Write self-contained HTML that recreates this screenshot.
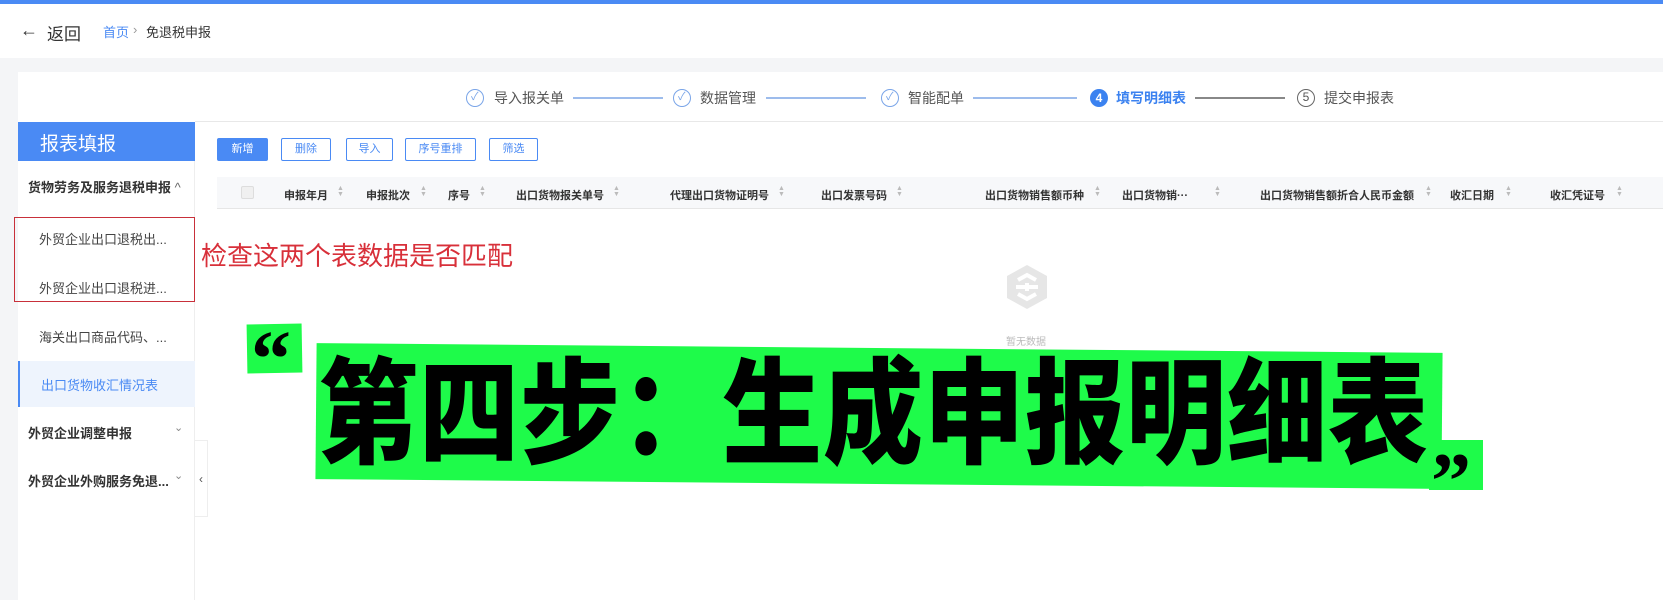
<!DOCTYPE html>
<html><head><meta charset="utf-8"><style>
*{margin:0;padding:0;box-sizing:border-box}
body{width:1663px;height:600px;overflow:hidden;background:#f4f5f7;font-family:"Liberation Sans","Noto Sans CJK SC",sans-serif;position:relative;color:#333}
.a{position:absolute;white-space:nowrap}
.top{left:0;top:0;width:1663px;height:4px;background:#4a8af4}
.hdr{left:0;top:4px;width:1663px;height:54px;background:#fff}
.card{left:18px;top:72px;width:1645px;height:528px;background:#fff}
.step{font-size:14px;color:#555;top:88px}
.circ{width:18px;height:18px;border:1.5px solid #7aa5e8;border-radius:50%;top:89px}
.line{height:1.5px;background:#9dbcec;top:97px}
.side{left:18px;top:122px;width:177px;height:478px;background:#fff;border-right:1px solid #eee}
.btn{top:138px;height:23px;border:1px solid #4a8af4;border-radius:2px;font-size:11px;color:#4a8af4;text-align:center;line-height:21px;background:#fff}
.th{font-size:11px;font-weight:bold;color:#333;top:187px}
.sort{font-size:7px;color:#bbb;line-height:6px;top:186px}
.mi{font-size:13px;color:#444}
</style></head><body>
<div class="a top"></div>
<div class="a hdr"></div>
<div class="a" style="left:20px;top:20px;font-size:18px;color:#333">←</div>
<div class="a" style="left:47px;top:20px;font-size:17px;color:#333">返回</div>
<div class="a" style="left:103px;top:22px;font-size:13px;color:#4a8af4">首页</div>
<div class="a" style="left:133px;top:22px;font-size:13px;color:#999">›</div>
<div class="a" style="left:146px;top:22px;font-size:13px;color:#333">免退税申报</div>
<div class="a card"></div>
<div class="a" style="left:195px;top:121px;width:1468px;height:1px;background:#e8e8e8"></div>

<div class="a circ" style="left:466px"></div><div class="a" style="left:471px;top:88px;font-size:11px;color:#7aa5e8">✓</div>
<div class="a step" style="left:494px">导入报关单</div>
<div class="a line" style="left:573px;width:90px"></div>
<div class="a circ" style="left:673px"></div><div class="a" style="left:678px;top:88px;font-size:11px;color:#7aa5e8">✓</div>
<div class="a step" style="left:700px">数据管理</div>
<div class="a line" style="left:766px;width:100px"></div>
<div class="a circ" style="left:881px"></div><div class="a" style="left:886px;top:88px;font-size:11px;color:#7aa5e8">✓</div>
<div class="a step" style="left:908px">智能配单</div>
<div class="a line" style="left:973px;width:104px"></div>
<div class="a" style="left:1090px;top:89px;width:18px;height:18px;border-radius:50%;background:#3b82f0;color:#fff;font-size:12px;font-weight:bold;text-align:center;line-height:18px">4</div>
<div class="a step" style="left:1116px;color:#3b82f0;font-weight:bold">填写明细表</div>
<div class="a line" style="left:1195px;width:90px;background:#888"></div>
<div class="a circ" style="left:1297px;border-color:#666;font-size:12px;line-height:15px;text-align:center;color:#555">5</div>
<div class="a step" style="left:1324px">提交申报表</div>

<div class="a side"></div>
<div class="a" style="left:18px;top:122px;width:177px;height:39px;background:#4a8af4"></div>
<div class="a" style="left:40px;top:129px;font-size:19px;color:#fff">报表填报</div>
<div class="a mi" style="left:28px;top:177px;font-weight:bold;color:#333">货物劳务及服务退税申报 <span style="font-weight:normal;color:#666">^</span></div>
<div class="a" style="left:14px;top:217px;width:181px;height:85px;border:1.5px solid #c8303a"></div>
<div class="a mi" style="left:39px;top:229px">外贸企业出口退税出...</div>
<div class="a mi" style="left:39px;top:278px">外贸企业出口退税进...</div>
<div class="a mi" style="left:39px;top:327px">海关出口商品代码、...</div>
<div class="a" style="left:18px;top:361px;width:177px;height:46px;background:#eef4fd;border-left:2px solid #4a8af4"></div>
<div class="a mi" style="left:41px;top:375px;color:#4a8af4">出口货物收汇情况表</div>
<div class="a mi" style="left:28px;top:423px;font-weight:bold;color:#333">外贸企业调整申报</div>
<div class="a" style="left:174px;top:421px;font-size:11px;color:#888">⌄</div>
<div class="a mi" style="left:28px;top:471px;font-weight:bold;color:#333">外贸企业外购服务免退...</div>
<div class="a" style="left:174px;top:469px;font-size:11px;color:#888">⌄</div>
<div class="a" style="left:195px;top:440px;width:13px;height:77px;background:#fff;border:1px solid #eee;border-left:none;font-size:12px;color:#555;line-height:77px;text-align:center">‹</div>

<div class="a btn" style="left:217px;width:51px;background:#4a8af4;color:#fff">新增</div>
<div class="a btn" style="left:281px;width:50px">删除</div>
<div class="a btn" style="left:346px;width:47px">导入</div>
<div class="a btn" style="left:405px;width:71px">序号重排</div>
<div class="a btn" style="left:489px;width:49px">筛选</div>

<div class="a" style="left:217px;top:177px;width:1446px;height:32px;background:#f7f8fa;border-bottom:1px solid #e6e6e6"></div>
<div class="a" style="left:241px;top:186px;width:13px;height:13px;border:1px solid #ddd;background:#f0f0f0;border-radius:2px"></div>
<div class="a th" style="left:284px">申报年月</div><div class="a sort" style="left:337px">▲<br>▼</div>
<div class="a th" style="left:366px">申报批次</div><div class="a sort" style="left:420px">▲<br>▼</div>
<div class="a th" style="left:448px">序号</div><div class="a sort" style="left:479px">▲<br>▼</div>
<div class="a th" style="left:516px">出口货物报关单号</div><div class="a sort" style="left:613px">▲<br>▼</div>
<div class="a th" style="left:670px">代理出口货物证明号</div><div class="a sort" style="left:778px">▲<br>▼</div>
<div class="a th" style="left:821px">出口发票号码</div><div class="a sort" style="left:896px">▲<br>▼</div>
<div class="a th" style="left:985px">出口货物销售额币种</div><div class="a sort" style="left:1094px">▲<br>▼</div>
<div class="a th" style="left:1122px">出口货物销···</div><div class="a sort" style="left:1214px">▲<br>▼</div>
<div class="a th" style="left:1260px">出口货物销售额折合人民币金额</div><div class="a sort" style="left:1425px">▲<br>▼</div>
<div class="a th" style="left:1450px">收汇日期</div><div class="a sort" style="left:1505px">▲<br>▼</div>
<div class="a th" style="left:1550px">收汇凭证号</div><div class="a sort" style="left:1616px">▲<br>▼</div>

<div class="a" style="left:201px;top:236px;font-size:26px;color:#d8303a">检查这两个表数据是否匹配</div>

<svg class="a" style="left:1004px;top:263px" width="46" height="48" viewBox="0 0 46 48"><polygon points="23,2 43,13 43,35 23,46 3,35 3,13" fill="#e6e6e6"/><path d="M14 17 L23 12 L32 17 M14 31 L23 36 L32 31 M23 20 V28 M12 24 H34" stroke="#fff" stroke-width="4" fill="none"/></svg>
<div class="a" style="left:1006px;top:333px;font-size:10px;color:#bbb">暂无数据</div>

<div class="a" style="left:247px;top:324px;width:55px;height:49px;background:#1efb4a;transform:rotate(-1deg)"></div>
<div class="a" style="left:251px;top:320px;font-size:80px;font-weight:bold;color:#000;font-family:'Liberation Serif',serif;line-height:80px">“</div>
<div class="a" style="left:316px;top:348px;width:1126px;height:136px;background:#1efb4a;transform:rotate(0.5deg)"></div>
<div class="a" style="left:318px;top:330px;font-size:100px;font-weight:900;color:#000;font-family:'Noto Sans CJK SC',sans-serif;line-height:130px;letter-spacing:1px;transform:scaleY(1.15);transform-origin:top left">第四步：生成申报明细表</div>
<div class="a" style="left:1429px;top:440px;width:54px;height:50px;background:#1efb4a"></div>
<div class="a" style="left:1431px;top:442px;font-size:80px;font-weight:bold;color:#000;font-family:'Liberation Serif',serif;line-height:80px">”</div>
</body></html>
